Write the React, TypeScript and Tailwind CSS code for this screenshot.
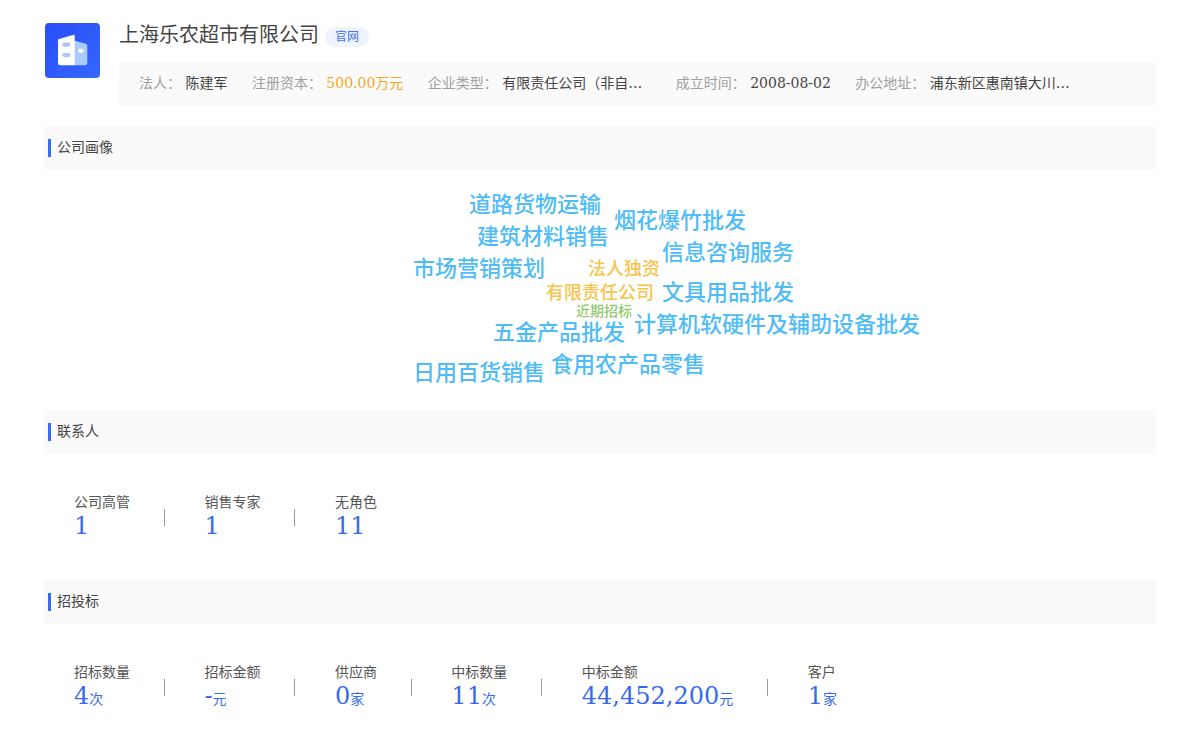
import React from "react";

type Info = { label: string; value: string; tone?: "accent"; fixed?: boolean };

const infos: Info[] = [
  { label: "法人", value: "陈建军" },
  { label: "注册资本", value: "500.00万元", tone: "accent" },
  { label: "企业类型", value: "有限责任公司（非自…", fixed: true },
  { label: "成立时间", value: "2008-08-02" },
  { label: "办公地址", value: "浦东新区惠南镇大川…", fixed: true },
];

type Stat = { label: string; value: string; unit?: string };

const contacts: Stat[] = [
  { label: "公司高管", value: "1" },
  { label: "销售专家", value: "1" },
  { label: "无角色", value: "11" },
];

const bids: Stat[] = [
  { label: "招标数量", value: "4", unit: "次" },
  { label: "招标金额", value: "-", unit: "元" },
  { label: "供应商", value: "0", unit: "家" },
  { label: "中标数量", value: "11", unit: "次" },
  { label: "中标金额", value: "44,452,200", unit: "元" },
  { label: "客户", value: "1", unit: "家" },
];

const large = "text-[22px] text-[#4fbcf7]";
const medium = "text-[18px] text-[#f8c54c]";
const small = "text-[14px] text-[#8fcb6e]";

const words = [
  { text: "道路货物运输", size: large, x: 269, y: 35 },
  { text: "烟花爆竹批发", size: large, x: 414, y: 51 },
  { text: "建筑材料销售", size: large, x: 277, y: 67 },
  { text: "信息咨询服务", size: large, x: 462, y: 83 },
  { text: "市场营销策划", size: large, x: 213, y: 99 },
  { text: "法人独资", size: medium, x: 388, y: 99 },
  { text: "有限责任公司", size: medium, x: 346, y: 123 },
  { text: "文具用品批发", size: large, x: 462, y: 123 },
  { text: "近期招标", size: small, x: 376, y: 141 },
  { text: "计算机软硬件及辅助设备批发", size: large, x: 434, y: 155 },
  { text: "五金产品批发", size: large, x: 293, y: 163 },
  { text: "食用农产品零售", size: large, x: 351, y: 195 },
  { text: "日用百货销售", size: large, x: 213, y: 203 },
];

function CompanyLogo() {
  return (
    <svg viewBox="0 0 55 55" className="size-[55px] shrink-0" aria-hidden="true">
      <defs>
        <linearGradient id="logo-bg" x1="0" y1="0" x2="1" y2="1">
          <stop offset="0" stopColor="#2a4df6" />
          <stop offset="1" stopColor="#3468ff" />
        </linearGradient>
      </defs>
      <rect width="55" height="55" rx="4" fill="url(#logo-bg)" />
      <path d="M29 17.5 L40.8 20.8 Q42.3 21.3 42.3 23 V40 Q42.3 42.3 40 42.3 H29 Z" fill="#a9cbfb" />
      <path d="M14 15.9 Q13 16.2 13 17.4 V40 Q13 42.3 15.3 42.3 H29.7 V12.3 Q29.7 11.5 28.8 11.8 Z" fill="#fff" />
      <rect x="17.2" y="19.6" width="8.2" height="4.2" rx="2.1" fill="#a9c6f8" />
      <rect x="17.2" y="29.9" width="8.2" height="4.2" rx="2.1" fill="#a9c6f8" />
      <rect x="33" y="25.7" width="5.8" height="4.2" rx="2.1" fill="#fff" />
    </svg>
  );
}

function SectionTitle({ children }: { children: React.ReactNode }) {
  return (
    <div className="flex h-11 items-center gap-1.5 bg-[#fafafa] pl-1">
      <span className="h-[18px] w-[3px] bg-[#366af0]" />
      <h2 className="pb-0.5 text-sm leading-5 text-[#444]">{children}</h2>
    </div>
  );
}

function StatList({ stats }: { stats: Stat[] }) {
  return (
    <div className="pl-[30px] pt-[38px]">
      {stats.map((s, i) => (
        <React.Fragment key={s.label}>
          <div className={i > 0 ? "ml-[35px] inline-flex items-center" : "inline-flex items-center"}>
            <div>
              <div className="text-sm leading-5 text-[#555]">{s.label}</div>
              <div className="text-sm leading-7 text-[#366af0]">
                <span className="text-2xl leading-7">{s.value}</span>
                {s.unit}
              </div>
            </div>
            {i < stats.length - 1 && <span className="ml-[34px] h-[17px] w-px bg-[#999]" />}
          </div>{" "}
        </React.Fragment>
      ))}
    </div>
  );
}

export default function App() {
  return (
    <main className="min-h-screen bg-white px-11 pb-8 pt-[22px] font-['DejaVu_Serif','Noto_Sans_CJK_SC',serif] text-sm" lang="zh-CN">
      <header className="flex gap-[19px] pl-px pt-px">
        <CompanyLogo />
        <div className="min-w-0 flex-1">
          <div className="flex h-[39px] items-start gap-1.5">
            <h1 className="text-xl leading-6 text-[#444]">上海乐农超市有限公司</h1>
            <a href="#" className="mt-1 rounded-full bg-[#eef3fe] px-2.5 text-xs leading-5 text-[#4472f0]">
              官网
            </a>
          </div>
          <div className="h-11 overflow-hidden whitespace-nowrap bg-[#fafafa] px-5 leading-[42px]">
            {infos.map((f) => (
              <React.Fragment key={f.label}>
                <span className="mr-5 inline-block">
                  <span className="text-[#a0a0a0]">{f.label}：</span>{" "}
                  <span
                    className={
                      f.tone === "accent"
                        ? "text-[#f5a623]"
                        : f.fixed
                          ? "inline-block w-[149px] align-top text-[#444]"
                          : "text-[#444]"
                    }
                  >
                    {f.value}
                  </span>
                </span>{" "}
              </React.Fragment>
            ))}
          </div>
        </div>
      </header>

      <section className="mt-5">
        <SectionTitle>公司画像</SectionTitle>
        <div className="relative mx-auto h-60 w-[800px]">
          {words.map((w) => (
            <span
              key={w.text}
              className={`absolute -translate-y-1/2 whitespace-nowrap font-medium leading-none ${w.size}`}
              style={{ left: w.x, top: w.y }}
            >
              {w.text}
            </span>
          ))}
        </div>
      </section>

      <section className="pb-[37px]">
        <SectionTitle>联系人</SectionTitle>
        <StatList stats={contacts} />
      </section>

      <section>
        <SectionTitle>招投标</SectionTitle>
        <StatList stats={bids} />
      </section>
    </main>
  );
}
